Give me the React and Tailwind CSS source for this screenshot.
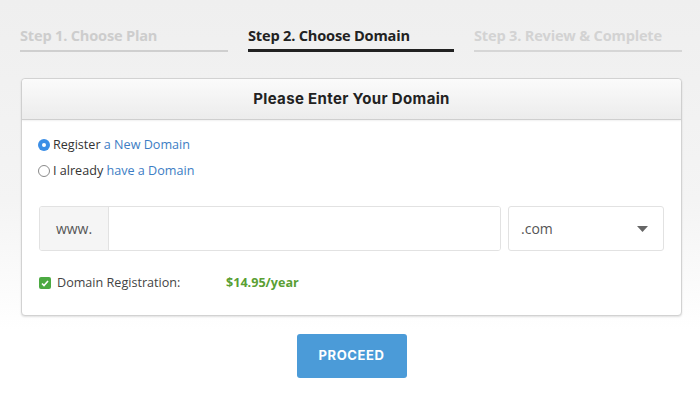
import React from "react";

export default function App() {
  const sans = { fontFamily: '"Open Sans", "Liberation Sans", sans-serif' };
  return (
    <div
      className="w-[700px] h-[403px] overflow-hidden bg-[linear-gradient(to_bottom,#efefef_0px,#f4f4f4_200px,#ffffff_330px)]"
      style={sans}
    >
      {/* Steps */}
      <div className="flex gap-5 pl-[20px] pr-[18px] pt-[25px]">
        <div className="w-[208px] border-b-2 border-[#cfcfcf] pb-[5px] text-[14.6px] leading-[20px] font-bold text-[#cdcdcd] tracking-[-0.2px]">
          Step 1. Choose Plan
        </div>
        <div className="w-[206px] border-b-[3px] border-[#222] pb-[4px] text-[14.6px] leading-[20px] font-bold text-[#222] tracking-[-0.2px]">
          Step 2. Choose Domain
        </div>
        <div className="flex-1 border-b-2 border-[#d6d6d6] pb-[5px] text-[14.6px] leading-[20px] font-bold text-[#d3d3d3] tracking-[-0.2px]">
          Step 3. Review &amp; Complete
        </div>
      </div>

      {/* Card */}
      <div className="ml-[21px] mt-[26px] w-[661px] rounded-[4px] border border-[#d2d2d2] bg-white shadow-[0_1px_2px_rgba(0,0,0,0.12)]">
        <div className="h-[41px] rounded-t-[4px] border-b border-[#cfcfcf] bg-[linear-gradient(to_bottom,#fbfbfb,#ececec)] flex items-center justify-center shadow-[0_1px_2px_rgba(0,0,0,0.06)]">
          <span
            className="text-[15px] font-bold text-[#222] tracking-[0.35px]"
            style={{ fontFamily: 'Inter, "Liberation Sans", sans-serif' }}
          >
            Please Enter Your Domain
          </span>
        </div>

        <div className="pl-[16px] pr-[17px] pt-[15px] pb-[23px]">
          <div className="flex flex-col gap-[6px] text-[12.6px] leading-[20px] text-[#333]">
            <label className="flex items-center">
              <span className="w-[12px] h-[12px] rounded-full bg-[#3b8ee6] flex items-center justify-center mr-[3px]">
                <span className="w-[4px] h-[4px] rounded-full bg-white" />
              </span>
              Register&nbsp;<span className="text-[#3c7dc4]">a New Domain</span>
            </label>
            <label className="flex items-center">
              <span className="w-[12px] h-[12px] rounded-full border border-[#8a8a8a] bg-white mr-[3px]" />
              I already&nbsp;<span className="text-[#3c7dc4]">have a Domain</span>
            </label>
          </div>

          <div className="mt-[25px] ml-[1px] flex gap-[7px] h-[45px]">
            <div className="flex flex-1 rounded-[3px] border border-[#e2e2e2] overflow-hidden">
              <div className="w-[69px] bg-[#f5f5f5] border-r border-[#e2e2e2] flex items-center justify-center text-[14px] text-[#555]">
                www.
              </div>
              <div className="flex-1 bg-white" />
            </div>
            <div className="w-[156px] rounded-[3px] border border-[#e2e2e2] bg-white flex items-center justify-between pl-[12px] pr-[15px] text-[14px] text-[#555]">
              <span>.com</span>
              <svg width="11" height="6" viewBox="0 0 11 6">
                <path d="M0 0 L11 0 L5.5 6 Z" fill="#666" />
              </svg>
            </div>
          </div>

          <div className="mt-[23px] ml-[1px] flex items-center text-[12.6px] leading-[18px]">
            <span className="w-[12px] h-[12px] rounded-[2px] bg-[#4caa42] flex items-center justify-center mr-[6px]">
              <svg width="8" height="7" viewBox="0 0 8 7">
                <path d="M1 3.5 L3 5.5 L7 1" stroke="white" strokeWidth="1.6" fill="none" />
              </svg>
            </span>
            <span className="w-[169px] text-[#444]">Domain Registration:</span>
            <span className="font-bold text-[#5a9f34]">$14.95/year</span>
          </div>
        </div>
      </div>

      {/* Button */}
      <div className="flex justify-center mt-[18px] pl-[3px]">
        <button
          className="w-[110px] h-[44px] rounded-[3px] bg-[#4b9bd8] text-white text-[13px] font-bold tracking-[0.6px]"
          style={{ fontFamily: 'Inter, "Liberation Sans", sans-serif' }}
        >
          PROCEED
        </button>
      </div>
    </div>
  );
}
